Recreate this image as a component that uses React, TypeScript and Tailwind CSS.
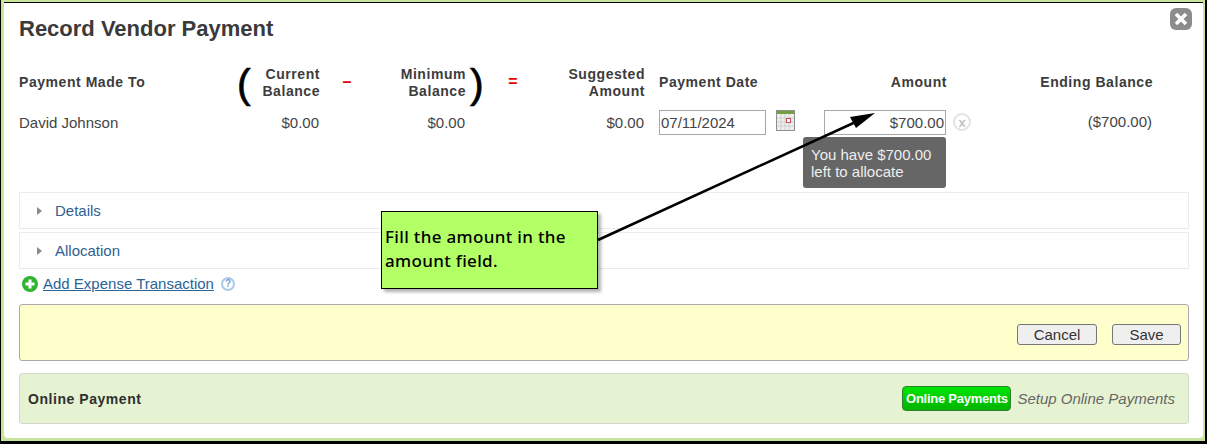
import React from "react";

const Th = ({ children, className = "" }: { children: React.ReactNode; className?: string }) => (
  <div className={`text-[14px] leading-[17px] font-bold tracking-[0.55px] text-[#3c3c3c] ${className}`}>{children}</div>
);

const Accordion = ({ label, className = "" }: { label: string; className?: string }) => (
  <div className={`h-[37px] border border-[#ebebeb] flex items-center pl-[17px] ${className}`}>
    <span className="w-0 h-0 border-y-[4px] border-y-transparent border-l-[5px] border-l-[#8a8a8a]" />
    <span className="ml-[13px] mt-[2px] text-[15px] text-[#30608f]">{label}</span>
  </div>
);

export default function App() {
  return (
    <div className="relative w-[1209px] h-[445px] overflow-hidden bg-white pr-[2px] pb-[1px] font-['Liberation_Sans',sans-serif]">
      <div className="h-full border-l border-r-2 border-b-[3px] border-black">
        <div className="h-full bg-[#c9e59b] pt-[2px] pl-[3px] pr-[2px] pb-[3px]">
          <div className="relative h-full bg-white rounded-b-[4px] border-t border-black pl-[15px] pr-[14px]">
            <h1 className="pt-[13px] text-[22px] leading-[26px] font-bold text-[#3a3a3a]">Record Vendor Payment</h1>

            <div className="absolute right-[11px] top-[5px] w-[22px] h-[22px] rounded-[6px] bg-[#8c8c8c] flex items-center justify-center">
              <svg width="14" height="14" viewBox="0 0 14 14"><path d="M2 2 12 12M12 2 2 12" stroke="#fff" strokeWidth="3.6" /></svg>
            </div>

            <div className="mt-[20px] grid grid-cols-[216px_15px_69px_56px_90px_22px_52px_105px_15px_165px_122px_206px] grid-rows-[40px_40px] items-center">
              <Th>Payment Made To</Th>
              <div className="pl-[2px] text-[41px] leading-none text-black font-normal [-webkit-text-stroke:0.7px_black] mt-[4px]">(</div>
              <Th className="text-right mt-[2px] -mr-[1px]">Current<br />Balance</Th>
              <div className="text-center text-[16px] font-bold text-[#e60000]">–</div>
              <Th className="text-right mt-[2px] -mr-[1px]">Minimum<br />Balance</Th>
              <div className="pl-[5px] text-[41px] leading-none text-black font-normal [-webkit-text-stroke:0.7px_black] mt-[4px]">)</div>
              <div className="text-center text-[16px] font-bold text-[#e60000]">=</div>
              <Th className="text-right mt-[2px] -mr-[1px]">Suggested<br />Amount</Th>
              <div />
              <Th>Payment Date</Th>
              <Th className="text-right -mr-[1px]">Amount</Th>
              <Th className="text-right -mr-[1px]">Ending Balance</Th>

              <div className="mt-[2px] text-[15px] text-[#444]">David Johnson</div>
              <div />
              <div className="mt-[2px] text-[15px] text-[#444] text-right">$0.00</div>
              <div />
              <div className="mt-[2px] text-[15px] text-[#444] text-right">$0.00</div>
              <div />
              <div />
              <div className="mt-[2px] text-[15px] text-[#444] text-right">$0.00</div>
              <div />
              <div className="flex items-start">
                <div className="w-[107px] h-[25px] border border-[#a8a8a8] pl-[1px] text-[15px] leading-[24px] text-[#444]">07/11/2024</div>
                <svg className="ml-[10px]" width="19" height="21" viewBox="0 0 19 21">
                  <rect width="19" height="21" fill="#8f8f8f" />
                  <rect x="1" y="1" width="17" height="19" fill="#eeeeee" />
                  <rect x="1" y="1" width="17" height="3" fill="#74a13f" />
                  <path d="M5 4v16M9 4v16M13 4v16M1 8h17M1 12h17M1 16h17" stroke="#d0d0d0" strokeWidth="1" />
                  <rect x="10.5" y="8.5" width="4" height="4" fill="#fff" stroke="#c0504d" />
                </svg>
              </div>
              <div className="h-[25px] border border-[#a8a8a8] pr-[1px] text-right text-[15px] leading-[24px] text-[#444]">$700.00</div>
              <div className="flex items-center justify-between">
                <span className="ml-[7px] w-[18px] h-[18px] rounded-full border-2 border-[#e2e2e2] flex items-center justify-center text-[13px] font-bold leading-none text-[#c2c2c2]">x</span>
                <span className="text-[15px] text-[#444]">($700.00)</span>
              </div>
            </div>

            <div className="absolute left-[799px] top-[134px] w-[143px] h-[51px] rounded-[3px] bg-[#666] px-[8px] pt-[9px] text-[15px] leading-[17px] text-[#eee]">
              You have $700.00<br />left to allocate
            </div>

            <Accordion label="Details" className="mt-[50px]" />
            <Accordion label="Allocation" className="mt-[3px]" />

            <div className="flex items-center h-[30px] pl-[3px]">
              <svg width="16" height="16" viewBox="0 0 16 16">
                <circle cx="8" cy="8" r="8" fill="#2fb52f" />
                <path d="M8 3.5v9M3.5 8h9" stroke="#fff" strokeWidth="3" />
              </svg>
              <span className="ml-[5px] text-[15px] text-[#2a6496] underline">Add Expense Transaction</span>
              <span className="ml-[7px] w-[14px] h-[14px] rounded-full border-2 border-[#a9cbe8] text-[10px] font-bold leading-[10px] text-center text-[#6fa3d2]">?</span>
            </div>

            <div className="mt-[5px] h-[57px] rounded-[3px] border border-[#a9a9a9] bg-[#ffffcc] flex items-center justify-end pr-[7px] pt-[4px] gap-[15px]">
              <button className="w-[80px] h-[21px] rounded-[3px] border border-[#777] bg-[#efefef] text-[15px] leading-none text-[#333]">Cancel</button>
              <button className="w-[69px] h-[21px] rounded-[3px] border border-[#777] bg-[#efefef] text-[15px] leading-none text-[#333]">Save</button>
            </div>

            <div className="mt-[12px] h-[51px] rounded-[3px] border border-[#d6d6cc] bg-[#e6f3d3] flex items-center pl-[8px] pr-[13px]">
              <span className="mt-[2px] text-[14px] font-bold tracking-[0.55px] text-[#2f2f2f]">Online Payment</span>
              <button className="ml-auto w-[109px] h-[25px] rounded-[4px] border border-[#2f7f2f] bg-linear-to-b from-[#00e600] to-[#00b300] text-[13px] font-bold tracking-[-0.25px] text-white whitespace-nowrap">Online Payments</button>
              <span className="ml-[6px] mt-[2px] text-[15px] italic text-[#666]">Setup Online Payments</span>
            </div>
          </div>
        </div>
      </div>

      <div className="absolute left-[381px] top-[211px] w-[217px] h-[78px] border border-black bg-[#b2ff66] shadow-[3px_3px_3px_rgba(0,0,0,0.3)] pl-[3px] pt-[13px] text-[17px] leading-[24px] font-medium tracking-[0.33px] text-black font-['Noto_Sans',sans-serif]">
        Fill the amount in the<br />amount field.
      </div>

      <svg className="absolute left-0 top-0 pointer-events-none" width="1209" height="445">
        <line x1="598" y1="240" x2="860" y2="120" stroke="#000" strokeWidth="2.5" />
        <polygon points="875,113 856,128 850,117" fill="#000" />
      </svg>
    </div>
  );
}
